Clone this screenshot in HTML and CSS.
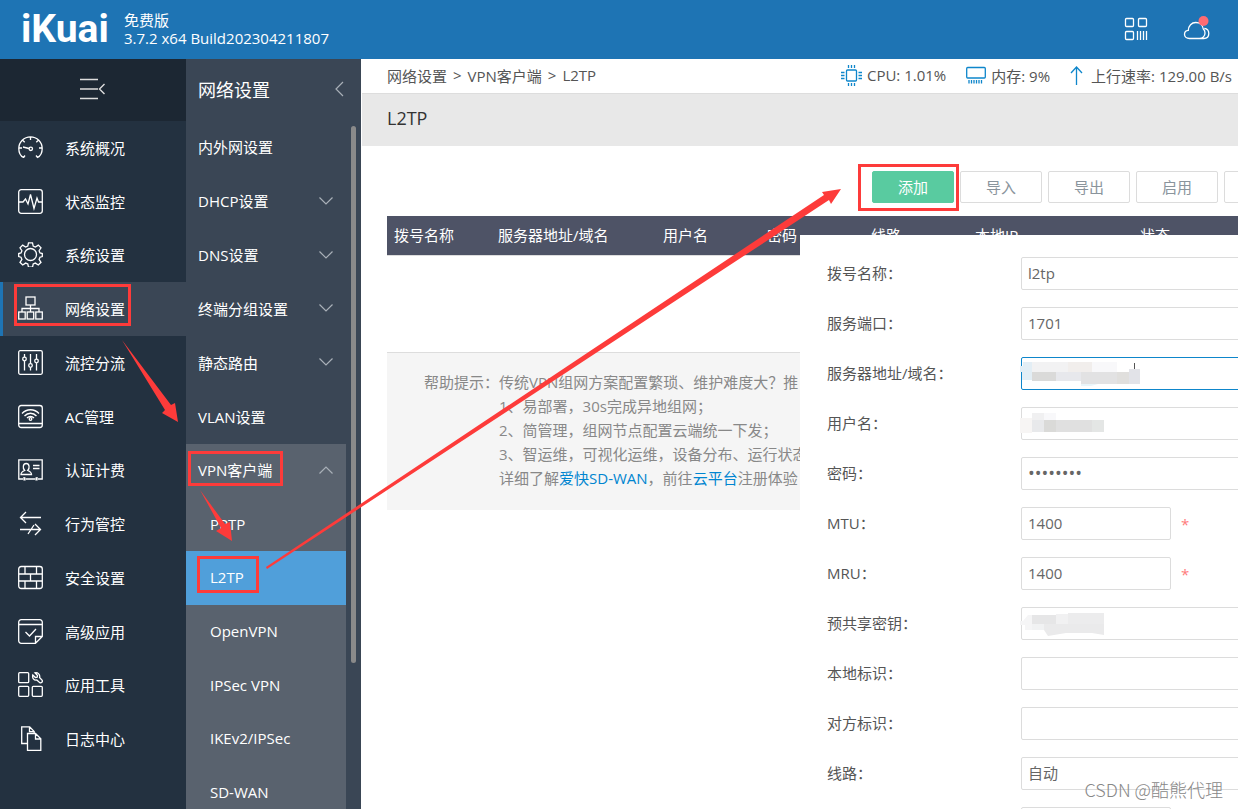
FILE: index.html
```html
<!DOCTYPE html>
<html lang="zh-CN">
<head>
    <meta charset="UTF-8">
    <meta name="viewport" content="width=device-width, initial-scale=1.0">
    <title>iKuai - L2TP</title>
    <link rel="stylesheet" href="styles.css">
</head>
<body>
    <header class="topbar">
        <div class="logo">iKuai</div>
        <div class="version">
            <div>免费版</div>
            <div>3.7.2 x64 Build202304211807</div>
        </div>
        <div class="top-icons">
            <button class="icon-btn" aria-label="应用">
                <svg width="24" height="24" viewBox="0 0 24 24"><rect x="1.5" y="1.5" width="8" height="8" rx="1"/><rect x="14.5" y="1.5" width="8" height="8" rx="1"/><rect x="1.5" y="14.5" width="8" height="8" rx="1"/><path d="M13.500 14v9M16.500 14v9M19.500 14v9M22.500 14v9"/></svg>
            </button>
            <button class="icon-btn" aria-label="云平台">
                <svg width="28" height="28" viewBox="0 0 28 28"><path d="M6.500 23.500C3.500 23.500 1.500 21.800 1.500 19.300c0-2.200 1.500-3.800 3.800-4C5.500 11 8.500 7.500 12.800 7.500c4 0 7 2.800 7.500 6.500 1.200.9 1.700 2.200 1.700 3.900 0 3.100-2.300 5.600-5.500 5.600zM17.500 23.500h3.300c3 0 5-2 5-4.900 0-3-1.800-4.900-4.500-5.200"/><circle class="dot" cx="20.500" cy="6" r="5"/></svg>
            </button>
        </div>
    </header>

    <div class="layout">
        <nav class="sidebar">
            <button class="toggle" aria-label="收起菜单">
                <svg width="27" height="22" viewBox="0 0 27 22"><path d="M1 1.500h18M1 11h18M1 20.500h18M25.500 6l-5 5 5 5"/></svg>
            </button>
            <ul class="menu">
                <li><a href="#"><svg viewBox="0 0 25 25"><path d="M5.500 22.500C2.500 21 .8 17.500.8 13.500.8 7 6 1.800 12.500 1.800S24.200 7 24.200 13.500c0 4-1.700 7.500-4.700 9l-1.500-2M5.500 22.500l1.500-2M12.500 2v3M20.300 5.200l-2 2M4.700 5.200l2 2M24 13h-3M1 13h3M5 12l6 1.500"/><circle cx="12.800" cy="13.800" r="1.700"/></svg>系统概况</a></li>
                <li><a href="#"><svg viewBox="0 0 25 25"><rect x=".7" y=".7" width="23.600" height="23.600" rx="2.500"/><path d="M1 13h4l2.500-3 2.500 5 2.500-9.500 3.500 14 3-10.500 1.500 4H24"/></svg>状态监控</a></li>
                <li><a href="#"><svg viewBox="0 0 25 25"><circle cx="12.500" cy="12.500" r="6"/><path d="M10.500.8h4l.7 3.300 2.200.9 2.900-1.900 2.700 2.700-1.900 2.900.9 2.200 2.300.6v3l-2.300.7-.9 2.200 1.900 2.900-2.700 2.700-2.900-1.900-2.200.9-.7 3.200h-4l-.7-3.200-2.200-.9-2.900 1.900L2 20.300l1.900-2.900-.9-2.200-2.300-.7v-3L3 10.900l.9-2.200L2 5.800l2.700-2.700L7.600 5l2.200-.9z"/></svg>系统设置</a></li>
                <li class="active"><a href="#"><svg viewBox="0 0 25 25"><rect x="8" y="1" width="9" height="8"/><rect x=".7" y="16" width="6.500" height="7"/><rect x="9.200" y="16" width="6.500" height="7"/><rect x="17.800" y="16" width="6.500" height="7"/><path d="M12.500 9v7M4 16v-3.500h17V16"/></svg>网络设置</a></li>
                <li><a href="#"><svg viewBox="0 0 25 25"><rect x=".7" y=".7" width="23.600" height="23.600" rx="1.500"/><path d="M6.500 4v3M6.500 11v9.500M12.500 4v9.500M12.500 17.500v3M18.500 4v5M18.500 13v7.500"/><circle cx="6.500" cy="9" r="1.800"/><circle cx="12.500" cy="15.500" r="1.800"/><circle cx="18.500" cy="11" r="1.800"/></svg>流控分流</a></li>
                <li><a href="#"><svg viewBox="0 0 25 25"><rect x=".7" y="1.500" width="23.600" height="22" rx="2.500"/><path d="M1 19.500h23M4 9.500c4.500-5 12.500-5 17 0M6.500 12c3.300-3.700 8.700-3.700 12 0M9 14c2-2 5-2 7 0"/><circle cx="12.500" cy="15" r="1.300"/></svg>AC管理</a></li>
                <li><a href="#"><svg viewBox="0 0 25 25"><path d="M5 22H.8V2.800h23.400V22H20M8 22h9M6 20v3.500M19 20v3.500M7 20.500v3M18 20.500v3M15 8.500h6.500M15 11.500h6.500M3 17.500h10.500c0-2.500-1.500-3.200-3.800-4 2.300-2.500 1.800-7-1.500-7s-3.800 4.500-1.500 7c-2.200.8-3.700 1.500-3.700 4z"/></svg>认证计费</a></li>
                <li><a href="#"><svg viewBox="0 0 25 25"><path d="M23 6.500H2.500M8 1L2.500 6.500 8 12M2 18.500h20.500M17 24l5.500-5.500L17 13M10 23l6-9"/></svg>行为管控</a></li>
                <li><a href="#"><svg viewBox="0 0 25 25"><rect x=".7" y="1.500" width="23.600" height="22" rx="2.500"/><path d="M1 9h23M1 16h23M7 1.500V9M18.500 1.500V9M12.500 9v7M7 16v7.500M18.500 16v7.500"/></svg>安全设置</a></li>
                <li><a href="#"><svg viewBox="0 0 25 25"><path d="M17.500 24.300H3.200A2.500 2.500 0 0 1 .7 21.800V3.200A2.500 2.500 0 0 1 3.200.7h18.600a2.500 2.500 0 0 1 2.500 2.500v14.300l-6.800 6.800v-6.800h6.800M1 5.500h23M7.500 13l4 4 6.500-7"/></svg>高级应用</a></li>
                <li><a href="#"><svg viewBox="0 0 25 25"><rect x=".7" y=".7" width="10" height="10" rx="1"/><rect x=".7" y="14.300" width="10" height="10" rx="1"/><rect x="14.300" y="14.300" width="10" height="10" rx="1"/><path d="M17 .8l2.500 2.700-.3 1.700-1.800.3L14.800 3c-.8 3 1 5.500 4 5l3 2.700c1.700.6 3-.8 2.400-2.400l-2.600-2.800C22.300 2.500 20 .3 17 .8z"/></svg>应用工具</a></li>
                <li><a href="#"><svg viewBox="0 0 25 25"><path d="M9.500 17.500H3.700V.8h8l4.500 4.700v2M11.500 1v4.700h4.700M9.500 7.500h8l5.300 5.300v11.500H9.500zM17.500 8v5h5"/></svg>日志中心</a></li>
            </ul>
        </nav>

        <nav class="submenu">
            <div class="submenu-head">
                <span>网络设置</span>
                <svg class="chevron" width="9" height="16" viewBox="0 0 9 16"><path d="M8 1L1 8l7 7"/></svg>
            </div>
            <ul class="sub-list">
                <li><a href="#">内外网设置</a></li>
                <li><a href="#">DHCP设置<svg class="chevron" viewBox="0 0 14 8"><path d="M.5.5L7 7 13.500.5"/></svg></a></li>
                <li><a href="#">DNS设置<svg class="chevron" viewBox="0 0 14 8"><path d="M.5.5L7 7 13.500.5"/></svg></a></li>
                <li><a href="#">终端分组设置<svg class="chevron" viewBox="0 0 14 8"><path d="M.5.5L7 7 13.500.5"/></svg></a></li>
                <li><a href="#">静态路由<svg class="chevron" viewBox="0 0 14 8"><path d="M.5.5L7 7 13.500.5"/></svg></a></li>
                <li><a href="#">VLAN设置</a></li>
            </ul>
            <ul class="sub-list open">
                <li><a href="#">VPN客户端<svg class="chevron" viewBox="0 0 14 8"><path d="M.5 7.500L7 1l6.500 6.500"/></svg></a></li>
                <li class="child"><a href="#">PPTP</a></li>
                <li class="child active"><a href="#">L2TP</a></li>
                <li class="child"><a href="#">OpenVPN</a></li>
                <li class="child"><a href="#">IPSec VPN</a></li>
                <li class="child"><a href="#">IKEv2/IPSec</a></li>
                <li class="child"><a href="#">SD-WAN</a></li>
            </ul>
            <div class="scrollbar"></div>
        </nav>

        <main class="main">
            <div class="crumbs">
                <div class="path"><span>网络设置</span><span>&gt;</span><span>VPN客户端</span><span>&gt;</span><span>L2TP</span></div>
                <div class="stats">
                    <span class="stat">
                        <svg width="21" height="21" viewBox="0 0 21 21"><rect x="5.500" y="5" width="10" height="11" rx="1"/><path d="M7.500 0v3M10.500 0v3M13.500 0v3M7.500 18v3M10.500 18v3M13.500 18v3M0 7.500h3.500M0 10.500h3.500M0 13.500h3.500M17.500 7.500H21M17.500 10.500H21M17.500 13.500H21"/></svg>
                        CPU: 1.01%
                    </span>
                    <span class="stat">
                        <svg width="20" height="18" viewBox="0 0 20 18"><rect x=".7" y="1.500" width="18.600" height="10.500" rx="1"/><path d="M3 14v3.500M5.500 14v3.500M8 14v3.500M10.500 14v3.500M13 14v3.500M15.500 14v3.500"/></svg>
                        内存: 9%
                    </span>
                    <span class="stat speed">
                        <svg width="13" height="19" viewBox="0 0 13 19"><path d="M6.500 19V1M1 7l5.500-6L12 7"/></svg>
                        上行速率: 129.00 B/s
                    </span>
                </div>
            </div>
            <h1 class="title">L2TP</h1>

            <div class="content">
                <div class="toolbar">
                    <button class="btn primary">添加</button>
                    <button class="btn">导入</button>
                    <button class="btn">导出</button>
                    <button class="btn">启用</button>
                    <button class="btn" aria-label="更多"></button>
                </div>
                <table class="table">
                    <thead>
                        <tr>
                            <th>拨号名称</th>
                            <th class="wide">服务器地址/域名</th>
                            <th>用户名</th>
                            <th>密码</th>
                            <th>线路</th>
                            <th class="wide">本地IP</th>
                            <th class="last">状态</th>
                        </tr>
                    </thead>
                </table>
                <div class="help">
                    <div class="help-label">帮助提示：</div>
                    <div class="help-text">
                        传统VPN组网方案配置繁琐、维护难度大？推<br>
                        1、易部署，30s完成异地组网；<br>
                        2、简管理，组网节点配置云端统一下发；<br>
                        3、智运维，可视化运维，设备分布、运行状态<br>
                        详细了解<a href="#">爱快SD-WAN</a>，前往<a href="#">云平台</a>注册体验
                    </div>
                </div>
            </div>
        </main>
    </div>

    <form class="drawer">
        <div class="row"><label for="name">拨号名称：</label><input id="name" type="text" value="l2tp"></div>
        <div class="row"><label for="port">服务端口：</label><input id="port" type="text" value="1701"></div>
        <div class="row">
            <label for="server">服务器地址/域名：</label>
            <div class="field">
                <input id="server" class="focus" type="text">
                <svg class="mask" width="130" height="33">
                    <path fill="#e3eef5" d="M2 5h9v18H1v-8h-2V9h3z"/><path fill="#f2f2f3" d="M11 5h36v10H11z"/><path fill="#f1eeec" d="M47 5h24v10H47z"/><path fill="#f8f8fa" d="M71 5h25v10H71z"/>
                    <path fill="#dadad9" d="M11 15h24v9H11z"/><path fill="#e7e8ec" d="M35 15h25v9H35z"/><path fill="#e2e2e3" d="M60 15h36v12H60z"/><path fill="#e0dfdd" d="M96 15h12v12H96z"/><path fill="#e2e3e8" d="M108 12h11v15h-11z"/><path fill="#eaf5f9" d="M60 27h17l-7 2H60z"/>
                    <path fill="#555" d="M113 6h1v6h-1z"/>
                </svg>
            </div>
        </div>
        <div class="row">
            <label for="user">用户名：</label>
            <div class="field">
                <input id="user" type="text">
                <svg class="mask" width="130" height="33">
                    <path fill="#f7f5f4" d="M-1 11h12v15H-1z"/><path fill="#f0f0f1" d="M11 6h12v7H11z"/><path fill="#f8f8fa" d="M23 6h12v7H23z"/><path fill="#e8e9eb" d="M11 13h12v12H11z"/><path fill="#dadad8" d="M23 13h12v12H23z"/><path fill="#e0e0e0" d="M35 13h36v12H35z"/><path fill="#e4e6e5" d="M71 13h12v12H71z"/>
                </svg>
            </div>
        </div>
        <div class="row"><label for="pwd">密码：</label><input id="pwd" class="password" type="password" value="12345678"></div>
        <div class="row"><label for="mtu">MTU：</label><input id="mtu" class="short" type="text" value="1400"><span class="required">*</span></div>
        <div class="row"><label for="mru">MRU：</label><input id="mru" class="short" type="text" value="1400"><span class="required">*</span></div>
        <div class="row">
            <label for="psk">预共享密钥：</label>
            <div class="field">
                <input id="psk" type="text">
                <svg class="mask" width="130" height="33">
                    <path fill="#f5f5f6" d="M7 8h5v15H4v-5h-5v-4h3z"/><path fill="#e6e6e7" d="M11 8h24v9H11z"/><path fill="#f1f1f2" d="M35 7h12v10H35z"/><path fill="#ececed" d="M47 6h36v11H47z"/><path fill="#f1f2f3" d="M11 17h12v6H11z"/><path fill="#eaeaeb" d="M23 17h60v11l-12-2H45l-18 3-4-6z"/>
                </svg>
            </div>
        </div>
        <div class="row"><label for="local">本地标识：</label><input id="local" type="text"></div>
        <div class="row"><label for="remote">对方标识：</label><input id="remote" type="text"></div>
        <div class="row"><label for="line">线路：</label><select id="line"><option>自动</option></select></div>
        <div class="row"><span></span><input class="short" type="text" aria-label="间隔"></div>
    </form>

    <!-- step marks -->
    <svg class="marks">
        <g class="boxes">
            <rect x="15.500" y="285.500" width="114" height="39"/>
            <rect x="189.500" y="452.500" width="92" height="32"/>
            <rect x="198.500" y="557.500" width="59" height="34"/>
            <rect x="859.500" y="165.500" width="98" height="44"/>
        </g>
        <path d="M122 340l49 65 4-2 3 19-16-9 3-3z"/>
        <path d="M200 490l25 34 5-2 2 19-16-10 5-3z"/>
        <path d="M266 567L824 195l-2-3 19-3-10 15-2-4L267 569z"/>
    </svg>
    <div class="watermark">CSDN @酷熊代理</div>
</body>
</html>
```
FILE: styles.css
```css
* {
    box-sizing: border-box;
}

body {
    margin: 0;
    height: 100vh;
    overflow: hidden;
    position: relative;
    display: flex;
    flex-direction: column;
    font-family: "Open Sans", "Noto Sans CJK SC", sans-serif;
    font-size: 15px;
    color: #555;
    background: #fff;
}

ul {
    list-style: none;
    margin: 0;
    padding: 0;
}

a {
    color: #0085d0;
    text-decoration: none;
}

button,
input,
select {
    font: inherit;
}

svg {
    fill: none;
    stroke: currentColor;
    flex-shrink: 0;
}

/* top bar */
.topbar {
    display: flex;
    align-items: center;
    height: 59px;
    flex-shrink: 0;
    padding: 0 27px 2px 21px;
    background: #1e74b4;
    color: #fff;
}

.logo {
    width: 103px;
    font-family: Roboto, sans-serif;
    font-size: 39px;
    font-weight: bold;
    line-height: 56px;
}

.version {
    line-height: 18px;
}

.top-icons {
    display: flex;
    align-items: center;
    gap: 35px;
    margin-left: auto;
}

.icon-btn {
    display: flex;
    padding: 0;
    border: none;
    background: none;
    color: #fff;
}

.icon-btn svg {
    stroke-width: 1.3;
}

.dot {
    fill: #ff6b72;
    stroke: none;
}

.layout {
    display: flex;
    flex: 1;
    min-height: 0;
}

/* first level menu */
.sidebar {
    width: 186px;
    flex-shrink: 0;
    background: #233140;
}

.toggle {
    display: flex;
    align-items: center;
    justify-content: center;
    width: 100%;
    height: 62px;
    padding: 0 2px 2px 0;
    border: none;
    background: #1c2733;
    color: #ddd;
}

.toggle svg {
    stroke-width: 1.4;
}

.menu {
    display: grid;
    grid-auto-rows: 1fr;
    height: 645px;
}

.menu a {
    display: flex;
    align-items: center;
    gap: 22px;
    height: 100%;
    padding: 0 0 1px 15px;
    border-left: 3px solid transparent;
    color: #fff;
}

.menu svg {
    width: 25px;
    height: 25px;
    stroke-width: 1.3;
}

.menu .active a {
    background: #3a4655;
    border-left-color: #1e74b4;
}

/* second level menu */
.submenu {
    position: relative;
    width: 175px;
    flex-shrink: 0;
    padding-right: 15px;
    background: #3a4655;
    color: #fff;
    overflow: hidden;
}

.submenu-head {
    display: flex;
    align-items: center;
    justify-content: space-between;
    height: 62px;
    padding: 0 2px 2px 12px;
    font-size: 18px;
}

.sub-list {
    display: grid;
    grid-auto-rows: 1fr;
    height: 323px;
}

.sub-list a {
    display: flex;
    align-items: center;
    justify-content: space-between;
    height: 100%;
    padding: 0 13px 2px 12px;
    color: #fff;
}

.sub-list svg {
    width: 14px;
    height: 8px;
}

.chevron {
    color: #a9b0b8;
    stroke-width: 1.2;
}

.sub-list.open {
    height: 376px;
    background: #59626e;
}

.sub-list .child a {
    padding-left: 24px;
}

.child.active {
    background: #509fda;
}

.scrollbar {
    position: absolute;
    top: 67px;
    right: 5px;
    width: 5px;
    height: 537px;
    border-radius: 3px;
    background: #8a8a8a;
}

/* content */
.main {
    flex: 1;
    min-width: 0;
    padding-left: 1px;
    overflow: hidden;
}

.crumbs {
    display: flex;
    align-items: center;
    justify-content: space-between;
    height: 35px;
    padding: 0 6px 2px 25px;
    border-bottom: 1px solid #ddd;
    white-space: nowrap;
}

.path {
    display: flex;
    gap: 6px;
}

.stats,
.stat {
    display: flex;
    align-items: center;
}

.stats {
    gap: 20px;
}

.stat {
    gap: 5px;
}

.speed {
    gap: 8px;
}

.stat svg {
    color: #0e86cb;
    stroke-width: 1.3;
}

.title {
    margin: 0;
    padding: 0 25px 4px;
    font-size: 18px;
    font-weight: normal;
    line-height: 48px;
    color: #333;
    background: #e8e8e8;
}

.content {
    padding: 25px 0 0 25px;
}

.toolbar {
    display: flex;
    justify-content: flex-end;
    gap: 6px;
    margin: 0 -68px 13px 0;
}

.btn {
    width: 82px;
    height: 32px;
    flex-shrink: 0;
    padding: 0 0 2px;
    border: 1px solid #dcdcdc;
    border-radius: 2px;
    background: #fff;
    color: #8a949c;
}

.btn.primary {
    border-color: #59cba0;
    background: #59cba0;
    color: #fff;
}

.table {
    width: 910px;
    table-layout: fixed;
    border-collapse: collapse;
    margin-bottom: 96px;
}

.table th {
    width: 104px;
    height: 39px;
    padding: 0 0 2px 7px;
    border-bottom: 1px solid #ddd;
    background: #4e5366;
    color: #fff;
    font-weight: normal;
    text-align: left;
    white-space: nowrap;
}

.table .wide {
    width: 165px;
}

.table .last {
    width: auto;
}

.help {
    display: flex;
    padding: 17px 0 20px 37px;
    border-top: 1px solid #ddd;
    background: #f5f5f5;
    color: #888;
    line-height: 24px;
    white-space: nowrap;
}

/* edit form over the list */
.drawer {
    position: absolute;
    top: 235px;
    left: 800px;
    right: 0;
    bottom: 0;
    display: flex;
    flex-direction: column;
    gap: 17px;
    padding: 22px 0 0 27px;
    overflow: hidden;
    background: #fff;
}

.row {
    display: grid;
    grid-template-columns: 194px auto 1fr;
    align-items: center;
    flex-shrink: 0;
    height: 33px;
}

.row label {
    padding-bottom: 2px;
}

.row input,
.row select {
    width: 420px;
    height: 33px;
    padding: 0 6px 2px;
    border: 1px solid #dcdcdc;
    border-radius: 2px;
    outline: none;
    appearance: none;
    background: #fff;
    color: #666;
}

.row .short {
    width: 150px;
}

.row .focus {
    border-color: #0e86cb;
}

.row .password {
    font-size: 18px;
}

.field {
    position: relative;
    height: 33px;
}

.mask {
    position: absolute;
    top: 0;
    left: 0;
    overflow: visible;
    stroke: none;
}

.required {
    padding-left: 10px;
    color: #ff7b7b;
}

.marks {
    position: absolute;
    top: 0;
    left: 0;
    width: 100%;
    height: 100%;
    pointer-events: none;
    stroke: none;
    fill: #fd3b3a;
}

.boxes {
    fill: none;
    stroke: #fd3b3a;
    stroke-width: 3;
}

.watermark {
    position: absolute;
    right: 15px;
    bottom: 7px;
    font-size: 18px;
    line-height: 26px;
    font-weight: 300;
    font-family: "Noto Sans CJK SC", sans-serif;
    color: #888;
}
```
